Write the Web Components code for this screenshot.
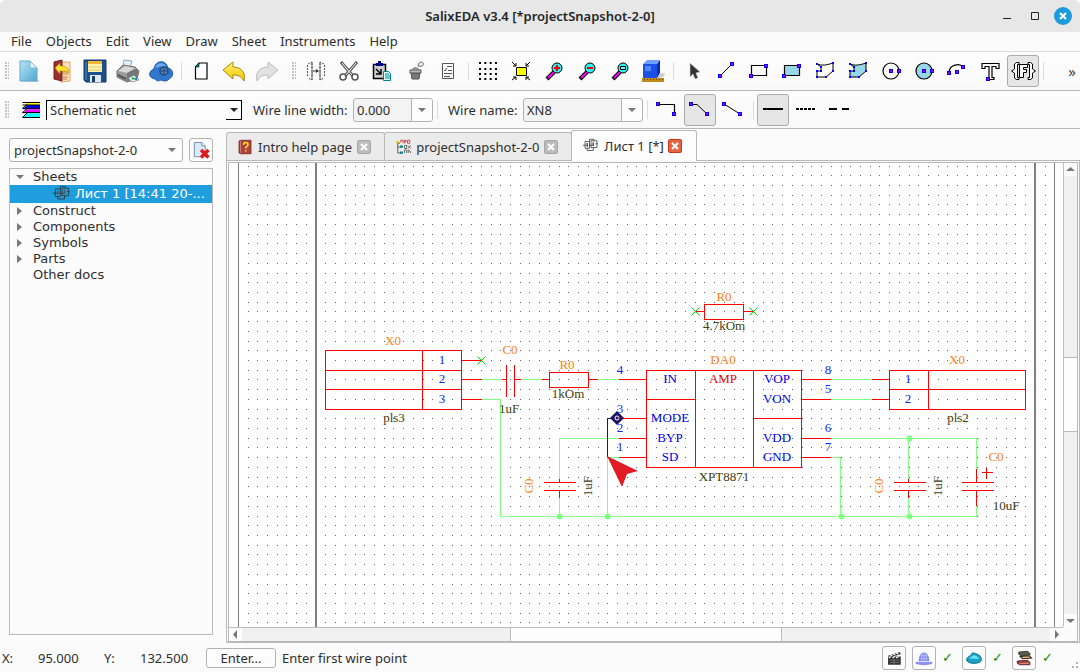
<!DOCTYPE html>
<html lang="en">
<head>
<meta charset="utf-8">
<title>SalixEDA v3.4 [*projectSnapshot-2-0]</title>
<style>
html,body{height:100%;margin:0}
body{background:#fbfbfb;font:13px/16px "Noto Sans","Open Sans",sans-serif;color:#2e2e2e}
</style>
</head>
<body>
<eda-app></eda-app>
<script>
const define=(name,html,setup)=>{
  const tpl=document.createElement('template');
  tpl.innerHTML=html;
  customElements.define(name,class extends HTMLElement{
    constructor(){
      super();
      this.attachShadow({mode:'open'}).append(tpl.content.cloneNode(true));
    }
    connectedCallback(){
      if(setup&&!this.ready){this.ready=true;setup(this,this.shadowRoot)}
    }
  });
};

const pt=(x,y)=>`<path d="M${x-2} ${y-2}h4v4h-4z" fill="#00f"/><path d="M${x-1} ${y-1}h2v2h-2z" fill="#a0c"/>`;
const lens=inner=>`<path d="M5 20l7-7" stroke="#000" stroke-width="4"/><path d="M6 19l6-6" stroke="#f0f" stroke-width="2"/><circle cx="15" cy="9" r="5" fill="#30f0f0" stroke="#000"/>${inner}`;
const sheet=`<path d="M4 6h6v9H4zM12 5h8v9h-8z" fill="none" stroke="#333"/><path d="M1 11h5M9 11h6M18 9h3M7 15v3h8v-4M10 6V3h6v2" fill="none" stroke="#333"/><path d="M6 8h2v5H6zM14 7h2v5h-2z" fill="#555"/>`;
const ICONS={
  new:`<path d="M4 21h18v2H6z" fill="#bbb" opacity=".6"/><path d="M3 2h10l7 7v13H3z" fill="url(#g)"/><path d="M3 2h10l7 7v13H3z" fill="none" stroke="#62a9cc"/><path d="M13 2v7h7z" fill="#e4f6fd" stroke="#79bbd9"/><defs><linearGradient id="g" x2="1" y2="1"><stop stop-color="#b7e2f3"/><stop offset="1" stop-color="#4fa9d3"/></linearGradient></defs>`,
  open:`<path d="M10 3h10v19l-9 1z" fill="#ffe3bd" stroke="#e2a467"/><path d="M13 13h5M13 15h5M13 18h5M13 20h4" stroke="#d27a35"/><path d="M4 3l8-2v21l-8-2z" fill="#98302d" stroke="#6e2020"/><path d="M5 9l5-5v3c6 0 9 2 9 7-2-2-5-2-9-2v3z" fill="#ffe32c" stroke="#b98d12" stroke-width=".7"/>`,
  save:`<path d="M1 1h22v22H3l-2-2z" fill="#1c4f8d" stroke="#123962"/><path d="M5 2h14v11H5z" fill="#fff3ae"/><path d="M5 2h14v3H5z" fill="#f4b53c"/><path d="M5 8h14M5 11h14" stroke="#e4c873"/><path d="M7 16h11v7H7z" fill="#dfe7ef"/><path d="M9 17h3v6H9z" fill="#1b3f6b"/><path d="M3 3v18" stroke="#4c90d3"/>`,
  print:`<path d="M7 8l1-7 8 1-2 7z" fill="#dff0fc" stroke="#8ba9bd"/><path d="M1 12l6-6 12 2 4 4-2 8-10 3-10-5z" fill="#9b9b9b" stroke="#6d6d6d"/><path d="M2 12l7-5 10 2-8 5z" fill="#d8d8d8"/><path d="M11 14l9-4 2 2-1 7-10 3z" fill="#757575"/><path d="M2 16l8 4" stroke="#555" stroke-width="2"/><path d="M12 19l6-3 5 5-7 2z" fill="#d9f0ff" stroke="#666" stroke-width=".6"/><path d="M15 19l3-1 1 2-2 1z" fill="#2bbf35"/><path d="M19 19h2v2h-2z" fill="#36f"/>`,
  cloud:`<path d="M5 10c1-9 12-10 14-1 6 1 6 9 1 11-2 3-6 2-8 1-4 2-5 0-6-1-7-1-7-8-1-10z" fill="#2d77cf" stroke="#245da7"/><path d="M6 9c2-6 10-6 11-1-5-2-8 0-11 1z" fill="#71abed"/><circle cx="15" cy="12" r="4" fill="#5484bd" stroke="#24456e" stroke-width="1.5"/><path d="M12 12h6M15 9v6" stroke="#24456e"/>`,
  page:`<path d="M10 4h8v16H6.500V8z" fill="#fff" stroke="#000" stroke-width="1.200"/><path d="M6 8l4-4v4z" fill="#088" stroke="#000" stroke-width=".6"/>`,
  undo:`<path d="M1 11l10-8v5c8 0 13 5 11 14-3-5-6-6-11-6v4z" fill="url(#u)" stroke="#a58a10"/><defs><linearGradient id="u" x2="0" y2="1"><stop stop-color="#fff46b"/><stop offset="1" stop-color="#f1c400"/></linearGradient></defs>`,
  redo:`<path d="M23 11L13 3v5C5 8 0 13 2 22c3-5 6-6 11-6v4z" fill="#e2e2e2" stroke="#bcbcbc"/>`,
  mirror:`<path d="M3.500 6v12M4 5l4-2v18l-4-2M20.500 6v12M20 5l-4-2v18l4-2" fill="none" stroke="#555" stroke-dasharray="2 1"/><path d="M8 3v18M16 3v18" stroke="#555" stroke-dasharray="3 1"/><path d="M9 12h5" stroke="#333"/><path d="M12 10l3 2-3 2z" fill="#333"/>`,
  cut:`<path d="M4 3l12 14M20 3L8 17" stroke="#555" stroke-width="3"/><path d="M5 4l10 12M19 4L9 16" stroke="#fff"/><circle cx="6" cy="18" r="3" fill="#fff" stroke="#555" stroke-width="1.500"/><circle cx="18" cy="18" r="3" fill="#fff" stroke="#555" stroke-width="1.500"/>`,
  paste:`<path d="M3.500 5.500h12v14h-12z" fill="#ccc" stroke="#000" stroke-width="1.500"/><path d="M6 4h7v3H6zM8 2h3v2H8z" fill="#008"/><path d="M6 10l4 4M11 10v5H6" fill="none" stroke="#000" stroke-width="1.500"/><path d="M13.500 12.500h5l2 2v7h-7z" fill="#dff" stroke="#088"/><path d="M15 15h4M15 17h5M15 19h5" stroke="#008b8b"/>`,
  bucket:`<path d="M8 14h9l-1 6H9z" fill="#777" stroke="#555"/><path d="M7 11h11v3H7z" fill="#bbb" stroke="#555"/><path d="M9 11c1-3 6-3 7 0" fill="#999" stroke="#666"/><path d="M15 7c0-3 3-5 5-3s-1 4-5 3z" fill="#eee" stroke="#666"/>`,
  list:`<path d="M6.500 4.500h11v15h-11z" fill="none" stroke="#555"/><path d="M8 11l1 1 2-3M11 7.500h5M12 11.500h4M8 14.500h8M8 17.500h6" stroke="#555" fill="none"/>`,
  grid:`<path d="M3 4h18M3 10h18M3 15h18M3 20h18" stroke="#000" stroke-width="2" stroke-dasharray="2 3.330"/>`,
  fit:`<path d="M7.500 8.500h10v8h-10z" fill="#ff0" stroke="#000"/><path d="M3 3l4 4M7 4v3H4M21 3l-4 4M17 4v3h3M3 21l4-3M4 18h3v3M21 21l-4-3M20 18h-3v3" stroke="#000" fill="none"/>`,
  zin:lens('<path d="M12 9h6M15 6v6" stroke="#e00" stroke-width="2"/>'),
  zout:lens('<path d="M12 9h6" stroke="#e00" stroke-width="2"/>'),
  zrect:lens('<path d="M12.500 7.500h5v3h-5z" fill="#6ff" stroke="#000"/>'),
  cube:`<path d="M16 20l7-3 1-3-5 1z" fill="#999" opacity=".5"/><path d="M2 5l4-4h13l-3 4z" fill="#6ea0ff"/><path d="M2 5h14v14H2z" fill="#1c4fe6"/><path d="M16 5l3-4v13l-3 5z" fill="#0b2baa"/><path d="M4 7h6v5H4z" fill="#4f86ff"/><path d="M1 19h22v4H1z" fill="#c08a1a"/><path d="M3 20.500h19" stroke="#6b4900" stroke-dasharray="1 2"/>`,
  arrow:`<path d="M9 4v14l3-3 2 5 3-1-2-5 4-1z" fill="#333" stroke="#ccc" stroke-width=".7"/>`,
  line:`<path d="M6 17L18 5" stroke="#000"/>${pt(6,17)}${pt(18,5)}`,
  rect:`<path d="M4.500 6.500h15v10h-15z" fill="none" stroke="#000" stroke-width="1.200"/>${pt(4,17)}${pt(19,7)}`,
  rectf:`<path d="M4.500 6.500h15v10h-15z" fill="#98d7ea" stroke="#000" stroke-width="1.200"/>${pt(4,17)}${pt(19,7)}`,
  poly:`<path d="M4 5c5 2 10 1 16-1v8l-7 6H4v-6h4V8z" fill="none" stroke="#000"/><path d="M3 4h2v2H3zM19 3h2v2h-2zM19 11h2v2h-2zM12 17h2v2h-2zM3 17h2v2H3zM3 11h2v2H3zM7 11h2v2H7zM7 7h2v2H7z" fill="#00f"/>`,
  polyf:`<path d="M4 5c5 2 10 1 16-1v8l-7 6H4v-6h4V8z" fill="#98d7ea" stroke="#000"/><path d="M3 4h2v2H3zM19 3h2v2h-2zM19 11h2v2h-2zM12 17h2v2h-2zM3 17h2v2H3zM3 11h2v2H3zM7 11h2v2H7zM7 7h2v2H7z" fill="#00f"/>`,
  circ:`<circle cx="12" cy="12" r="8" fill="none" stroke="#000" stroke-width="1.200"/>${pt(12,12)}${pt(20,12)}`,
  circf:`<circle cx="12" cy="12" r="8" fill="#98d7ea" stroke="#000" stroke-width="1.200"/>${pt(12,12)}${pt(20,12)}`,
  arc:`<path d="M4 14c0-9 11-10 14-6" fill="none" stroke="#000" stroke-width="1.200"/>${pt(4,14)}${pt(18,8)}${pt(12,13)}`,
  text:`<path d="M4 4.500h17v5h-3v-2h-4v11h2v2H9v-2h2v-11H7v2H4z" fill="#fff" stroke="#000" stroke-width="1.200"/>${pt(10,20)}`,
  fmt:`<path d="M8 3.500H5.500L3.500 5v5l-3 2 3 2v5l2 1.500H8v-2H6.500V5.500H8zM17 3.500h2.500l2 1.500v5l3 2-3 2v5l-2 1.500H17v-2h1.500V5.500H17z" fill="#fff" stroke="#000"/><path d="M8.500 5.500h8v3h-4v2h3v3h-3v5h-4z" fill="#fff" stroke="#000"/>`,
  layers:`<path d="M9 3h15v5H3z" fill="#ff0"/><path d="M9 6h15v5H3z" fill="#00f"/><path d="M9 11h15v5H3z" fill="#f0f"/><path d="M9 16h15v5H3z" fill="#0ff"/><path d="M3 3h21M3 21h21M3 10h21M3 15h21M3 6h21M9 5l-6 5M9 10l-6 5M9 15l-6 6" stroke="#000" stroke-width="1.200"/>`,
  w1:`<path d="M3 6.500h16.500V16" fill="none" stroke="#000" stroke-width="1.200"/>${pt(3,6)}${pt(19,16)}`,
  w2:`<path d="M3 6.500h6L19 16" fill="none" stroke="#000"/>${pt(3,6)}${pt(19,16)}`,
  w3:`<path d="M3 6l16 10" stroke="#000"/>${pt(3,6)}${pt(19,16)}`,
  l1:`<path d="M2 11h20" stroke="#000" stroke-width="2"/>`,
  l2:`<path d="M2 11h20" stroke="#000" stroke-width="2" stroke-dasharray="3 1"/>`,
  l3:`<path d="M2 11h8M15 11h7" stroke="#000" stroke-width="2"/>`,
  del:`<path d="M4 3h9l4 4v13H4z" fill="#dce9f7" stroke="#5b7ba6"/><path d="M13 3v4h4" fill="#fff" stroke="#5b7ba6"/><path d="M12 12l9 9M21 12l-9 9" stroke="#e01a1a" stroke-width="4"/>`,
  help:`<path d="M4 4l3-1h13v18H6l-2-1z" fill="#ad433a" stroke="#77221f"/><path d="M6 4v16" stroke="#d98a7f"/><path d="M10 9c0-4 6-4 6 0 0 2-3 2-3 5M13 16v2" fill="none" stroke="#ffe326" stroke-width="2"/>`,
  proj:`<path d="M5 5v15h5M5 12h5M5 7h3" fill="none" stroke="#333"/><path d="M3 4h4v3H3z" fill="#cc3"/><path d="M8 10h4v3H8zM8 18h4v3H8z" fill="#088"/><path d="M9 6V3h3v4M14 7V3h2v2h-2M18 3h3v4h-3z" stroke="#b22" fill="none"/><path d="M14 10h3v4h-3zM19 10l3 4M22 10l-3 4M14 20v-4h3v4M19 20v-4l3 2v2" stroke="#444" fill="none"/>`,
  sheet,
  clap:`<path d="M4 10h17v11H4z" fill="#343434"/><path d="M4 9l16-5 1 3-14 4z" fill="#333"/><path d="M7 8l3 1M11 7l3 1M15 5l3 2M5 12l3-2M10 12l3-2M15 12l3-2" stroke="#fff" stroke-width="1.500"/><path d="M6 15h13M6 18h13M12 13v7" stroke="#999" stroke-width=".7"/>`,
  helmet:`<path d="M5 16c0-15 14-15 14 0z" fill="#7b82ef"/><path d="M1 17h22v3c-7 2-15 2-22 0z" fill="#8b92f4"/><path d="M7 9h10M6 13h12M9 5v11M12 4v12M15 5v11" stroke="#c9ccff"/>`,
  drop:`<path d="M2 14c0-4 6-4 8-9 5 1 12 3 12 9 0 7-20 7-20 0z" fill="#189fc4" stroke="#09647e"/><path d="M5 13c2-3 5-3 7-5 3 1 6 3 7 5-4 1-9-1-14 0z" fill="#70dff3"/>`,
  books:`<path d="M5 4l12-1 3 3v2L8 9 5 7z" fill="#565f48" stroke="#222"/><path d="M7 10l12-1 3 3-12 1z" fill="#e9bd82" stroke="#33271a" stroke-width="1.500"/><path d="M3 16l14-1 3 3v3H6l-3-2z" fill="#9c362e" stroke="#512"/><path d="M6 19h13" stroke="#f0cdb0"/>`
};

define('eda-icon',`<style>:host{display:block;width:24px;height:24px;flex:none}svg{display:block;width:100%;height:100%;overflow:visible}</style><svg viewBox="0 0 24 24" aria-hidden="true"></svg>`,
(el,r)=>{r.querySelector('svg').innerHTML=ICONS[el.getAttribute('name')]});

define('eda-tool',`<style>
:host{display:block;flex:none;margin-right:1px}
button{display:flex;align-items:center;justify-content:center;width:32px;height:32px;padding:0;border:1px solid transparent;border-radius:3px;background:none}
:host([pressed]) button{background:#e6e6e6;border-color:#ababab}
</style><button type="button"><eda-icon></eda-icon></button>`,
(el,r)=>{
  const n=el.getAttribute('icon'),i=document.createElement('eda-icon');
  i.setAttribute('name',n);r.querySelector('eda-icon').replaceWith(i);
  r.querySelector('button').setAttribute('aria-label',el.getAttribute('label')||n);
});

define('eda-sep',`<style>:host{display:block;flex:none;width:1px;height:18px;margin:0 3px;background:#dcdcdc}</style>`);
define('eda-grip',`<style>:host{display:block;flex:none;width:4px;height:18px;background:radial-gradient(circle at 1px 1px,#c4c4c4 1px,transparent 1px) 0 0/3px 3px}</style>`);

define('eda-toolbar',`<style>
:host{display:flex;align-items:center;height:38px;border-bottom:1px solid #b8b8b8;background:linear-gradient(#fdfdfd,#f9f9f9);overflow:hidden;box-sizing:border-box;white-space:nowrap}
</style><slot></slot>`);

define('eda-combo',`<style>
:host{display:block;position:relative;flex:none}
select{appearance:none;display:block;width:100%;height:24px;box-sizing:border-box;margin:0;padding:0 24px 0 4px;border:1px solid #b2b2b2;border-radius:3px;background:#fdfdfd;font:inherit;color:inherit}
.arrow{position:absolute;right:1px;top:1px;bottom:1px;width:20px;display:flex;align-items:center;justify-content:center;pointer-events:none}
.arrow::after{content:"";border:4px solid transparent;border-bottom:0;border-top-color:#767676}
:host([split]) select{background:#f3f3f3;padding-left:3px}
:host([split]) .arrow{width:20px;border-left:1px solid #b2b2b2;background:#fcfcfc;border-radius:0 3px 3px 0}
:host([inset]) select{height:20px;border:0;border-top:1px solid #000;border-left:1px solid #000;border-radius:0;padding:0 20px 0 3px}
:host([inset]) .arrow{width:15px;border:solid #000;border-width:0 1px 1px 0;right:0;bottom:0}
:host([inset]) .arrow::after{border-top-color:#222}
</style><select></select><span class="arrow"></span>`,
(el,r)=>{
  const s=r.querySelector('select');
  s.add(new Option(el.getAttribute('value')));
  s.setAttribute('aria-label',el.getAttribute('label'));
});

define('eda-titlebar',`<style>
:host{display:grid;grid-template-columns:1fr auto 1fr;align-items:center;height:32px;background:#e7e7e7;border-radius:6px 6px 0 0;box-sizing:border-box}
h1{grid-column:2;margin:0;font:600 13px/16px "Noto Sans",sans-serif;color:#262626}
.win{display:flex;justify-content:flex-end;align-items:center;gap:10px;padding-right:8px}
button{width:18px;height:18px;padding:0;border:0;background:none;display:block}
svg{display:block}
</style><h1>SalixEDA v3.4 [*projectSnapshot-2-0]</h1>
<div class="win">
<button aria-label="Minimize"><svg width="18" height="18"><path d="M5 11.500h8" stroke="#222"/></svg></button>
<button aria-label="Maximize"><svg width="18" height="18"><path d="M5.500 5.500h7v7h-7z" fill="none" stroke="#222"/></svg></button>
<button aria-label="Close"><svg width="18" height="18"><circle cx="9" cy="9" r="9" fill="#1c9bdc"/><path d="M6 6l6 6M12 6l-6 6" stroke="#fff" stroke-width="2"/></svg></button>
</div>`);

define('eda-menubar',`<style>
:host{display:block;height:20px;box-sizing:border-box;border-bottom:1px solid #dcdcdc;background:#fbfbfb}
nav{display:flex;gap:14px;padding:1px 0 0 11px}
button{font:inherit;color:inherit;padding:0;border:0;background:none}
</style><nav></nav>`,
(el,r)=>{r.querySelector('nav').innerHTML=['File','Objects','Edit','View','Draw','Sheet','Instruments','Help'].map(t=>`<button type="button">${t}</button>`).join('')});

define('project-panel',`<style>
:host{display:flex;flex-direction:column;gap:6px;width:204px;flex:none;padding:9px 13px 9px 9px}
.top{display:flex;gap:6px}
eda-combo{flex:1}
.del{width:24px;height:24px;padding:0;border:1px solid #b2b2b2;border-radius:3px;background:#fcfcfc;display:flex;align-items:center;justify-content:center}
.del eda-icon,.sel eda-icon{width:20px;height:20px}
ul{flex:1;list-style:none;margin:0;padding:0;border:1px solid #b9b9b9;font:13px/16px "DejaVu Sans",sans-serif;background:#fbfbfb}
li{display:flex;align-items:center;height:16px;padding-left:7px}
li::before{content:"";width:6px;margin-right:10px;flex:none}
li.shut::before{width:0;margin-right:11px;border:solid transparent;border-width:4px 0 4px 5px;border-left-color:#777;}
li.open::before{width:0;margin-right:9px;border:solid transparent;border-width:4px 4px 0;border-top-color:#777;margin-left:-1px}
li.sel{height:18px;padding-left:24px;background:#1f9ede;color:#fff;gap:3px}
li.sel::before{margin-right:9px}
</style>
<div class="top"><eda-combo value="projectSnapshot-2-0" label="Project"></eda-combo><button class="del" aria-label="Close project"><eda-icon name="del"></eda-icon></button></div>
<ul><li class="open">Sheets</li><li class="sel"><eda-icon name="sheet"></eda-icon>Лист 1 [14:41 20-...</li><li class="shut">Construct</li><li class="shut">Components</li><li class="shut">Symbols</li><li class="shut">Parts</li><li>Other docs</li></ul>`);

define('eda-tab',`<style>
:host{display:flex;align-items:center;gap:4px;height:28px;padding:1px 13px 0 9px;box-sizing:border-box;background:#ebebeb;border:1px solid #b9b9b9;border-bottom:0;margin-right:-1px;border-radius:3px 3px 0 0;white-space:nowrap}
:host([active]){height:31px;padding:0 14px 1px 10px;background:#fdfdfd;margin-bottom:-1px;position:relative}
button{width:14px;height:14px;padding:0;margin-left:1px;border:1px solid #a6a6a6;border-radius:2px;background:#bcbcbc}
:host([active]) button{background:#e26646;border-color:#c8381d;margin-left:0}
svg{display:block}
</style><slot name="icon"></slot><slot></slot><button aria-label="Close tab"><svg width="12" height="12"><path d="M3 3l6 6M9 3l-6 6" stroke="#fff" stroke-width="2"/></svg></button>`);

define('eda-scrollbar',`<style>
:host{display:flex;background:#f0f0f0;flex:none;box-sizing:border-box}
:host([dir=v]){flex-direction:column;width:14px;border-left:1px solid #bdbdbd}
:host([dir=h]){height:14px;border-top:1px solid #bdbdbd}
button{flex:none;width:13px;height:13px;padding:0;border:0;background:#fdfdfd;display:flex;align-items:center;justify-content:center}
svg{display:block;width:9px;height:9px}
:host([dir=v]) svg{transform:rotate(90deg)}
.a,.b{flex:var(--a) 0 0}.b{flex-grow:var(--b)}
.t{flex:var(--t) 0 0;background:#fdfdfd;border:solid #bdbdbd;border-width:0 1px}
:host([dir=v]) .t{border-width:1px 0}
</style><button aria-label="Back"><svg><path d="M6 0v9L2 4.500z" fill="#777"/></svg></button><div class="a"></div><div class="t"></div><div class="b"></div><button aria-label="Forward"><svg><path d="M3 0v9l4-4.500z" fill="#777"/></svg></button>`);

const seg=(d,c)=>`<path d="${d}" fill="none" stroke="${c}"/>`;
const labels=(list,c)=>`<g fill="${c}">`+list.map(([t,x,y,rot])=>`<text x="${x}" y="${y}"${rot?` transform="rotate(-90 ${x} ${y})"`:''}>${t}</text>`).join('')+'</g>';

define('schematic-view',`<style>
:host{display:block;background:#fff;overflow:hidden;min-width:0;min-height:0}
svg{display:block;width:100%;height:100%}
text{font:13px "Liberation Serif",serif;text-anchor:middle}
</style><svg><g id="w" transform="translate(-228.500 -162.500)"></g><g id="t" transform="translate(-229 -163)"></g></svg>`,
(el,r)=>{
  const pitch=9.72;let dots='';
  for(let j=0;j<48;j++)for(let i=0;i<83;i++)
    dots+=`M${Math.floor(248.1+i*pitch)} ${Math.floor(166.1+j*pitch)}h1`;
  const green='M481 379H501M520 379H541M597 379H618M481 399H500V516H976V505M618 438H559V478M559 497V516M618 457H607V516M830 379H871M830 399H871M830 438H976V468M908 438V478M908 497V516M830 457H840V516';
  const red='M325 350H461V409H325ZM422 350V409M325 370H461M325 389H461M461 360H481M461 379H481M461 399H481M501 379H506M514 379H520M506 364V396M514 364V396M541 379H549M549 372H588V387H549ZM588 379H597M618 379H646M618 418H646M618 438H646M618 457H646M646 370H801V467H646ZM695 370V467M753 370V467M646 399H695M753 418H801M801 379H830M801 399H830M801 438H830M801 457H830M704 304H743V319H704ZM695 311H704M743 311H753M889 370H1025V409H889ZM928 370V409M889 389H1025M871 379H889M871 399H889M543 482H575M543 490H575M559 478V482M559 490V497M893 482H925M893 490H925M908 478V482M908 490V497M961 482H993M961 490H993M976 468V482M976 490V505M981 472H992M986 467V478';
  r.getElementById('w').innerHTML=
   `<g shape-rendering="crispEdges"><path d="${dots}" transform="translate(-.500 0)" stroke="#666"/>
   <path d="M238 0V2000M1054 0V2000" stroke="#808080"/><path d="M315.500 0V2000M1034.500 0V2000" stroke="#808080" stroke-width="2"/>
   ${seg(green,'#80ff80')}${seg(red,'#f00')}</g>
   ${seg('M477 356l8 8M485 356l-8 8M691 307l8 8M699 307l-8 8M749 307l8 8M757 307l-8 8','#00e000')}
   <g fill="#80ff80"><circle cx="559" cy="516" r="3"/><circle cx="607" cy="516" r="3"/><circle cx="841" cy="516" r="3"/><circle cx="909" cy="516" r="3"/><circle cx="909" cy="438" r="3"/></g>
   <path d="M607 457V418H617" fill="none" stroke="#1c1464"/>`;
  r.getElementById('t').innerHTML=
   labels([['X0',393,345],['C0',510,354],['R0',567,369],['R0',724,301],['DA0',723,364],['X0',957,364],['C0',996,461],['C0',533,486,1],['C0',883,486,1]],'#ff8010')
   +labels([['pls3',394,422],['1uF',509,413],['1kOm',568,398],['4.7kOm',724,330],['XPT8871',724,481],['pls2',958,422],['10uF',1006,510],['1uF',592,486,1],['1uF',942,486,1]],'#404010')
   +labels([['1',442,364],['2',442,383],['3',442,403],['4',620,374],['3',620,413],['2',620,432],['1',620,451],['8',828,374],['5',828,393],['6',828,432],['7',828,451],['1',908,383],['2',908,403]],'#1028ff')
   +labels([['IN',670,383],['MODE',670,422],['BYP',670,442],['SD',670,461],['VOP',777,383],['VON',777,403],['VDD',777,442],['GND',777,461]],'#0000f0')
   +labels([['AMP',723,383]],'#f00000')
   +`<path d="M617 411l7 7-7 7-7-7z" fill="#1c1464"/><circle cx="617" cy="418" r="2" fill="none" stroke="#fff"/><path d="M617 418h3" stroke="#f00"/>
   <path d="M607 456l31 15-11 3-5 13z" fill="#e01b24"/>`;
});

define('document-area',`<style>
:host{display:flex;flex-direction:column;flex:1;min-width:0;min-height:0;padding:0 0 1px}
.tabs{display:flex;align-items:flex-end;height:31px;flex:none}
.tabs eda-icon{width:18px;height:18px}
.pane{flex:1;min-height:0;border:1px solid #b9b9b9;padding:1px 1px 0;display:flex}
.view{flex:1;min-width:0;display:grid;grid-template:minmax(0,1fr) auto/minmax(0,1fr) auto;border:1px solid #b9b9b9}
.h{--a:269;--t:270;--b:269}
.v{--a:182;--t:73;--b:183}
</style>
<div class="tabs">
<eda-tab><eda-icon slot="icon" name="help"></eda-icon>Intro help page</eda-tab>
<eda-tab><eda-icon slot="icon" name="proj"></eda-icon>projectSnapshot-2-0</eda-tab>
<eda-tab active><eda-icon slot="icon" name="sheet"></eda-icon>Лист 1 [*]</eda-tab>
</div>
<div class="pane"><div class="view"><schematic-view></schematic-view><eda-scrollbar dir="v" class="v"></eda-scrollbar><eda-scrollbar dir="h" class="h"></eda-scrollbar></div></div>`);

define('status-bar',`<style>
:host{display:flex;align-items:center;height:28px;flex:none;padding:0 0 0 2px;white-space:nowrap}
.k{width:36px}.v{width:66px}.w{width:66px}
.enter{width:70px;height:20px;margin-right:6px;padding:0;border:1px solid #b2b2b2;border-radius:3px;background:#fcfcfc;font:inherit;color:inherit}
.right{margin-left:auto;display:flex;align-items:center;gap:6px}
.i{width:24px;height:24px;padding:0;border:1px solid #b2b2b2;border-radius:3px;background:#fcfcfc;display:flex;align-items:center;justify-content:center}
.i eda-icon{width:18px;height:18px}
.ok{width:14px;color:#0a8a0a;font-family:"DejaVu Sans",sans-serif}
.size{width:12px;height:12px;margin-left:6px;align-self:flex-end;background:radial-gradient(circle at 1px 1px,#b4b4b4 1px,transparent 1px) 0 0/4px 4px;clip-path:polygon(100% 0,100% 100%,0 100%)}
</style>
<span class="k">X:</span><span class="v">95.000</span><span class="k">Y:</span><span class="w">132.500</span><button class="enter">Enter...</button><span>Enter first wire point</span>
<div class="right"><button class="i" aria-label="Record"><eda-icon name="clap"></eda-icon></button><button class="i" aria-label="Server"><eda-icon name="helmet"></eda-icon></button><span class="ok">✓</span><button class="i" aria-label="Cloud"><eda-icon name="drop"></eda-icon></button><span class="ok">✓</span><button class="i" aria-label="Library"><eda-icon name="books"></eda-icon></button><span class="ok">✓</span><span class="size"></span></div>`);

const tools=s=>s.split(' ').map(n=>n==='|'?'<eda-sep></eda-sep>':`<eda-tool icon="${n.replace('!','')}"${n.endsWith('!')?' pressed':''}></eda-tool>`).join('');
define('eda-app',`<style>
:host{display:flex;flex-direction:column;height:100vh;min-height:400px;overflow:hidden}
main{display:flex;flex:1;min-height:0}
eda-toolbar,eda-titlebar,eda-menubar{flex:none}
.first{height:39px}
.g1{margin:0 4px 0 5px}.g2{margin:0 4px 0 8px}.g3{margin:0 11px 0 5px}
.layer{width:20px;height:20px}
.net{width:196px;margin:0 11px 0 6px}
.lw{width:80px}.wn{width:120px}
.f1{width:100px}.f2{width:75px;margin-left:7px}
.e{margin-left:4px}
.more{margin-left:auto;padding:0 4px;border:0;background:none;font:15px/16px "Noto Sans",sans-serif;color:#444}
</style>
<eda-titlebar></eda-titlebar><eda-menubar></eda-menubar>
<eda-toolbar class="first"><eda-grip class="g1"></eda-grip>${tools('new open save print cloud | page undo redo')}<eda-grip class="g2"></eda-grip>${tools('mirror cut paste bucket list | grid fit zin zout zrect cube | arrow line rect rectf poly polyf circ circf arc text fmt! |')}<button class="more" aria-label="More tools">»</button></eda-toolbar>
<eda-toolbar><eda-grip class="g3"></eda-grip><eda-icon class="layer" name="layers"></eda-icon><eda-combo inset class="net" value="Schematic net" label="Layer"></eda-combo><span class="f1">Wire line width:</span><eda-combo split class="lw" value="0.000" label="Wire line width"></eda-combo><eda-sep class="e"></eda-sep><span class="f2">Wire name:</span><eda-combo split class="wn" value="XN8" label="Wire name"></eda-combo><eda-sep class="e"></eda-sep>${tools('w1 w2! w3 | l1! l2 l3')}</eda-toolbar>
<main><project-panel></project-panel><document-area></document-area></main>
<status-bar></status-bar>`);
</script>
</body>
</html>
